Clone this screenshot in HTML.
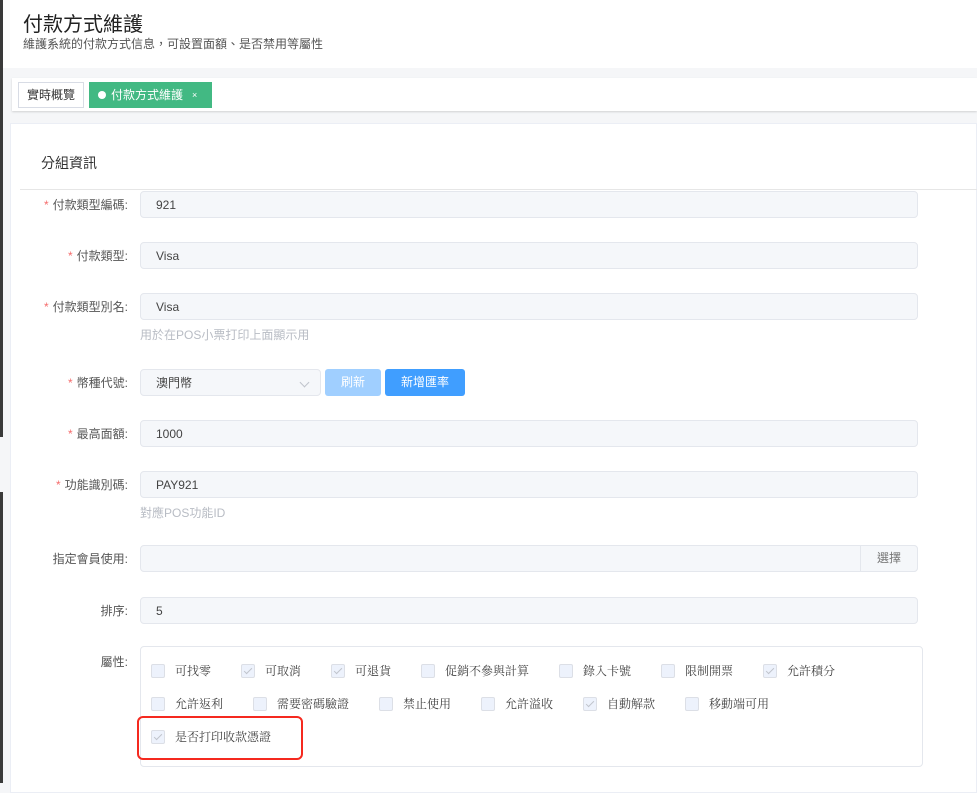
<!DOCTYPE html>
<html><head><meta charset="utf-8"><style>
*{box-sizing:border-box;margin:0;padding:0}
body{width:977px;height:783px;overflow:hidden;background:#f5f6f8;font-family:"Liberation Sans","Noto Sans CJK TC",sans-serif;color:#333;position:relative}
.strip{position:absolute;left:0;width:3px;background:#3a3a3a}
.header{position:absolute;left:3px;top:0;width:974px;height:68px;background:#fff}
.header h1{position:absolute;left:20px;top:8px;font-size:20px;font-weight:normal;color:#222}
.header p{position:absolute;left:20px;top:35px;font-size:12px;color:#555}
.tabs{position:absolute;left:12px;top:78px;width:965px;height:33px;background:#fff;box-shadow:0 1px 2px rgba(0,0,0,.15)}
.tab1{position:absolute;left:6px;top:4px;width:66px;height:26px;border:1px solid #d8dce5;font-size:12px;line-height:24px;text-align:center;color:#333}
.tab2{position:absolute;left:77px;top:4px;width:123px;height:26px;background:#42b983;color:#fff;font-size:12px;line-height:26px;padding-left:22px}
.tab2:before{content:"";position:absolute;left:9px;top:9px;width:8px;height:8px;border-radius:50%;background:#fff}
.tab2 span{position:absolute;left:103px;font-size:9px}
.card{position:absolute;left:10px;top:123px;width:967px;height:670px;background:#fff;border:1px solid #ebeef5}
.card h2{position:absolute;left:30px;top:29px;font-size:14px;font-weight:normal;color:#333}
.div{position:absolute;left:20px;top:189px;width:957px;height:1px;background:#e6e6e6}
.lbl{position:absolute;right:849px;font-size:12px;color:#555;white-space:nowrap}
.lbl i{color:#f56c6c;font-style:normal;margin-right:4px}
.inp{position:absolute;left:140px;width:778px;height:27px;background:#f5f7fa;border:1px solid #e4e7ed;border-radius:4px;font-size:12px;line-height:26px;padding-left:15px;color:#444}
.hint{position:absolute;left:140px;font-size:12px;color:#b8bcc4}
.btn{position:absolute;top:369px;height:27px;border-radius:3px;color:#fff;font-size:12px;line-height:27px;text-align:center}
.attr{position:absolute;left:140px;top:646px;width:783px;height:121px;border:1px solid #e4e7ed;border-radius:4px;background:#fff}
.cb{position:absolute;font-family:"Liberation Serif","Noto Serif CJK TC",serif;font-size:12px;color:#444;white-space:nowrap;line-height:14px}
.cb b{display:inline-block;width:14px;height:14px;border:1px solid #dcdfe6;background:#edf2fc;border-radius:2px;vertical-align:top;margin-right:10px;position:relative}
.cb b.c:after{content:"";position:absolute;left:4px;top:1px;width:3px;height:7px;border:solid #c0c4cc;border-width:0 1px 1px 0;transform:rotate(45deg)}
.red{position:absolute;left:137px;top:716px;width:166px;height:44px;border:2px solid #f5291f;border-radius:6px}
.arr{position:absolute;right:12px;top:9px;width:7px;height:7px;border:solid #c0c4cc;border-width:0 1px 1px 0;transform:rotate(45deg)}
</style></head><body>
<div class="strip" style="top:0;height:437px"></div>
<div class="strip" style="top:492px;height:291px"></div>
<div class="header"><h1>付款方式維護</h1><p>維護系統的付款方式信息，可設置面額、是否禁用等屬性</p></div>
<div class="tabs"><div class="tab1">實時概覽</div><div class="tab2">付款方式維護<span>×</span></div></div>
<div class="card"><h2>分組資訊</h2></div>
<div class="div"></div>

<div class="lbl" style="top:196px"><i>*</i>付款類型編碼:</div><div class="inp" style="top:191px">921</div>
<div class="lbl" style="top:247px"><i>*</i>付款類型:</div><div class="inp" style="top:242px">Visa</div>
<div class="lbl" style="top:298px"><i>*</i>付款類型別名:</div><div class="inp" style="top:293px">Visa</div>
<div class="hint" style="top:326px">用於在POS小票打印上面顯示用</div>
<div class="lbl" style="top:374px"><i>*</i>幣種代號:</div>
<div class="inp" style="top:369px;width:181px">澳門幣<span class="arr"></span></div>
<div class="btn" style="left:325px;width:56px;background:#a0cfff">刷新</div>
<div class="btn" style="left:385px;width:80px;background:#409eff">新增匯率</div>
<div class="lbl" style="top:425px"><i>*</i>最高面額:</div><div class="inp" style="top:420px">1000</div>
<div class="lbl" style="top:476px"><i>*</i>功能識別碼:</div><div class="inp" style="top:471px">PAY921</div>
<div class="hint" style="top:504px">對應POS功能ID</div>
<div class="lbl" style="top:550px">指定會員使用:</div><div class="inp" style="top:545px"></div>
<div style="position:absolute;left:860px;top:545px;width:58px;height:27px;border:1px solid #e4e7ed;border-radius:0 4px 4px 0;background:#f5f7fa;font-size:12px;line-height:25px;text-align:center;color:#777">選擇</div>
<div class="lbl" style="top:602px">排序:</div><div class="inp" style="top:597px">5</div>
<div class="lbl" style="top:653px">屬性:</div>
<div class="attr"></div>
<div class="cb" style="left:151px;top:664px"><b></b>可找零</div>
<div class="cb" style="left:241px;top:664px"><b class="c"></b>可取消</div>
<div class="cb" style="left:331px;top:664px"><b class="c"></b>可退貨</div>
<div class="cb" style="left:421px;top:664px"><b></b>促銷不參與計算</div>
<div class="cb" style="left:559px;top:664px"><b></b>錄入卡號</div>
<div class="cb" style="left:661px;top:664px"><b></b>限制開票</div>
<div class="cb" style="left:763px;top:664px"><b class="c"></b>允許積分</div>
<div class="cb" style="left:151px;top:697px"><b></b>允許返利</div>
<div class="cb" style="left:253px;top:697px"><b></b>需要密碼驗證</div>
<div class="cb" style="left:379px;top:697px"><b></b>禁止使用</div>
<div class="cb" style="left:481px;top:697px"><b></b>允許溢收</div>
<div class="cb" style="left:583px;top:697px"><b class="c"></b>自動解款</div>
<div class="cb" style="left:685px;top:697px"><b></b>移動端可用</div>
<div class="cb" style="left:151px;top:730px"><b class="c"></b>是否打印收款憑證</div>
<div class="red"></div>
</body></html>
